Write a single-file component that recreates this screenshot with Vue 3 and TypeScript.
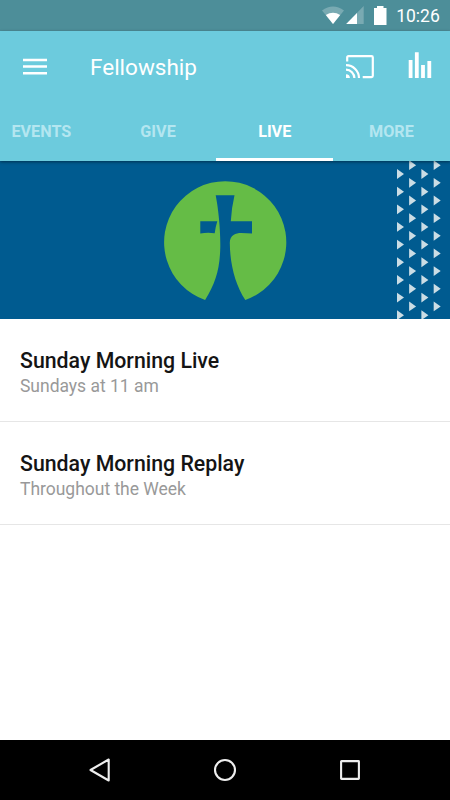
<script setup lang="ts">
interface Tab {
  label: string
  active?: boolean
}
interface Stream {
  title: string
  schedule: string
}
interface Point {
  x: number
  y: number
}

const tabs: Tab[] = [
  { label: 'EVENTS' },
  { label: 'GIVE' },
  { label: 'LIVE', active: true },
  { label: 'MORE' },
]

const streams: Stream[] = [
  { title: 'Sunday Morning Live', schedule: 'Sundays at 11 am' },
  { title: 'Sunday Morning Replay', schedule: 'Throughout the Week' },
]

// Staggered columns of triangles on the right of the banner
const triangles: Point[] = [397, 409.1, 421.4, 433.7].flatMap((x, column) =>
  Array.from({ length: 9 }, (_, row) => ({
    x,
    y: (column % 2 === 0 ? 13 : 4.2) + row * 17.65,
  })),
)
</script>

<template>
  <div class="screen">
    <div class="status">
      <svg class="signals" width="68" height="31" viewBox="0 0 68 31">
        <path d="M1 10.5Q12 2.5 23 10.5L12 24Z" fill="#fff" fill-opacity=".25" />
        <path d="M4.800 15Q12 10.500 19.200 15L12 24Z" fill="#fff" />
        <path d="M42.700 6V24H25.200Z" fill="#fff" fill-opacity=".25" />
        <path d="M36 13V24H25.200Z" fill="#fff" />
        <path d="M53 8H56V6H62.500V8H65.500V25H53Z" fill="#fff" />
      </svg>
      <span class="clock">10:26</span>
    </div>

    <header class="appbar">
      <div class="toolbar">
        <svg class="menu" width="24" height="18" viewBox="0 0 24 18">
          <path d="M0 2H24M0 8.600H24M0 15.200H24" stroke="#fff" stroke-width="2.500" />
        </svg>
        <h1>Fellowship</h1>
        <svg class="cast" width="28" height="24" viewBox="0 0 28 24" fill="none" stroke="#fff" stroke-width="2.200">
          <path d="M1.200 6.500V2.500Q1.200 1.200 2.500 1.200H25.500Q26.800 1.200 26.800 2.500V20.800Q26.800 22.100 25.500 22.100H16.700" />
          <path d="M0 10.100A13 13 0 0 1 13 23.100M0 14.700A8.400 8.400 0 0 1 8.400 23.100" />
          <path d="M0 19.200A3.900 3.900 0 0 1 3.900 23.100H0Z" fill="#fff" stroke="none" />
        </svg>
        <svg class="levels" width="24" height="26" viewBox="0 0 24 26" fill="#fff">
          <path d="M.7 8H4.500V26H.7ZM6.900 .3H10.700V26H6.900ZM13.100 13H16.900V26H13.100ZM19.400 9H23.200V26H19.400Z" />
        </svg>
      </div>
      <nav class="tabs">
        <span v-for="tab in tabs" :key="tab.label" class="tab" :class="{ active: tab.active }">{{ tab.label }}</span>
      </nav>
    </header>

    <div class="banner">
      <svg width="450" height="158" viewBox="0 0 450 158">
        <path
          d="M205.100 139A61.100 61.100 0 1 1 245.300 139C235.500 124 230 104 229.800 82C229.800 74 236 72 241 72Q247 72 252 72.600V60.300H230.800Q231.500 47 234.500 34.200H215.700C218.200 47 220.500 67 220.300 86C219.800 109 215.500 122 205.100 139Z"
          fill="#65bc46"
        />
        <path d="M200.300 60.300H217.300Q215.500 66 214.700 72.200Q207 70.900 200.300 72.600Z" fill="#005b90" />
        <path
          v-for="(t, i) in triangles"
          :key="i"
          :d="`M${t.x} ${t.y - 4.900}L${t.x + 7} ${t.y}L${t.x} ${t.y + 4.900}Z`"
          fill="#cbdde5"
        />
      </svg>
    </div>

    <main class="list">
      <article v-for="stream in streams" :key="stream.title" class="row">
        <h2>{{ stream.title }}</h2>
        <p>{{ stream.schedule }}</p>
      </article>
    </main>

    <footer class="navbar">
      <svg width="24" height="26" viewBox="0 0 24 26">
        <path d="M2.500 13L20.700 2.500V23.500Z" />
      </svg>
      <svg width="24" height="26" viewBox="0 0 24 26">
        <circle cx="12" cy="13" r="10" />
      </svg>
      <svg width="24" height="26" viewBox="0 0 24 26">
        <rect x="3.100" y="4.100" width="17.800" height="17.800" rx=".4" />
      </svg>
    </footer>
  </div>
</template>

<style>
body {
  margin: 0;
}
</style>

<style scoped>
.screen {
  display: flex;
  flex-direction: column;
  width: 450px;
  height: 800px;
  overflow: hidden;
  background: #fff;
  font-family: Roboto, sans-serif;
}
.status {
  display: flex;
  justify-content: flex-end;
  height: 31px;
  padding-right: 9px;
  background: #4d8e99;
  color: #fff;
}
.signals {
  margin-right: 6px;
}
.clock {
  width: 46px;
  font-size: 17.5px;
  line-height: 32px;
  white-space: nowrap;
  text-align: center;
}
.appbar {
  position: relative;
  height: 130px;
  background: #6ccbdd;
  color: #fff;
  box-shadow: 0 1px 3px rgba(0, 0, 0, 0.45);
}
.toolbar {
  display: flex;
  height: 71px;
  align-items: center;
  padding: 0 18px 0 23px;
}
.menu {
  margin-right: 43px;
}
h1 {
  flex: 1;
  margin: 0;
  font-size: 22.5px;
  font-weight: 400;
  line-height: 28px;
}
.cast {
  margin-right: 34px;
}
.levels {
  margin-top: -3px;
}
.tabs {
  display: flex;
  height: 59px;
  margin-left: -17px;
}
.tab {
  box-sizing: border-box;
  flex: none;
  width: 116.7px;
  height: 59px;
  border-bottom: 3px solid transparent;
  color: #b4e6f0;
  font-size: 16.2px;
  font-weight: 700;
  line-height: 60px;
  text-align: center;
}
.tab.active {
  border-color: #fff;
  color: #fff;
}
.banner {
  height: 158px;
  background: #005b90;
}
.banner svg {
  display: block;
}
.list {
  flex: 1;
}
.row {
  box-sizing: border-box;
  height: 103px;
  padding: 29px 20px 0;
  border-bottom: 1px solid #e6e6e6;
}
h2 {
  margin: 0;
  color: #141414;
  font-size: 21.3px;
  font-weight: 500;
  line-height: 26px;
}
p {
  margin: 0;
  color: #999;
  font-size: 17.5px;
  letter-spacing: -0.02px;
  line-height: 24px;
}
.navbar {
  display: flex;
  box-sizing: border-box;
  height: 60px;
  align-items: center;
  justify-content: space-between;
  padding: 0 88px;
  background: #000;
}
.navbar svg {
  fill: none;
  stroke: #eee;
  stroke-width: 2.1;
  stroke-linejoin: round;
}
</style>
